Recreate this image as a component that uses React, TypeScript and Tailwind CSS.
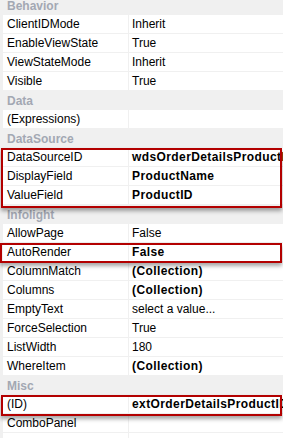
type Row = { name: string; value?: string; bold?: boolean };
type Section = { title: string; rows: Row[] };

const sections: Section[] = [
  {
    title: 'Behavior',
    rows: [
      { name: 'ClientIDMode', value: 'Inherit' },
      { name: 'EnableViewState', value: 'True' },
      { name: 'ViewStateMode', value: 'Inherit' },
      { name: 'Visible', value: 'True' },
    ],
  },
  { title: 'Data', rows: [{ name: '(Expressions)' }] },
  {
    title: 'DataSource',
    rows: [
      { name: 'DataSourceID', value: 'wdsOrderDetailsProductID', bold: true },
      { name: 'DisplayField', value: 'ProductName', bold: true },
      { name: 'ValueField', value: 'ProductID', bold: true },
    ],
  },
  {
    title: 'Infolight',
    rows: [
      { name: 'AllowPage', value: 'False' },
      { name: 'AutoRender', value: 'False', bold: true },
      { name: 'ColumnMatch', value: '(Collection)', bold: true },
      { name: 'Columns', value: '(Collection)', bold: true },
      { name: 'EmptyText', value: 'select a value...' },
      { name: 'ForceSelection', value: 'True' },
      { name: 'ListWidth', value: '180' },
      { name: 'WhereItem', value: '(Collection)', bold: true },
    ],
  },
  {
    title: 'Misc',
    rows: [
      { name: '(ID)', value: 'extOrderDetailsProductID', bold: true },
      { name: 'ComboPanel' },
      { name: '' },
    ],
  },
];

function PropRow({ row }: { row: Row }) {
  return (
    <div className="flex h-[19px] border-b border-[#f0f0f0] pl-[3px]">
      <div className="flex w-[125px] items-center bg-white pl-[4px] text-black">{row.name}</div>
      <div className="w-px bg-[#f0f0f0]" />
      <div
        className={`flex min-w-0 flex-1 items-center overflow-hidden whitespace-nowrap bg-white pl-[3px] text-black ${
          row.bold ? 'font-bold tracking-[0.4px]' : ''
        }`}
      >
        {row.value}
      </div>
    </div>
  );
}

export default function App() {
  return (
    <div
      className="relative h-[438px] w-[283px] overflow-hidden bg-[#f0f0f0] text-[12px] leading-none"
      style={{ fontFamily: '"Liberation Sans", Arial, sans-serif' }}
    >
      <div className="mt-[-4px]">
        {sections.map((s) => (
          <div key={s.title}>
            <div className="flex h-[19px] items-center pl-[7px] font-bold text-[#a3a8b3]">{s.title}</div>
            {s.rows.map((r, i) => (
              <PropRow key={i} row={r} />
            ))}
          </div>
        ))}
      </div>

      {/* highlight boxes drawn over the grid */}
      <div className="absolute left-[1px] top-[148px] h-[60px] w-[281px] border-2 border-[#b30000] shadow-[0_3px_4px_rgba(0,0,0,0.35)]" />
      <div className="absolute left-0 top-[243px] h-[20px] w-[282px] border-2 border-[#b30000] shadow-[0_3px_4px_rgba(0,0,0,0.35)]" />
      <div className="absolute left-[1px] top-[395px] h-[21px] w-[281px] border-2 border-[#b30000] shadow-[0_3px_4px_rgba(0,0,0,0.35)]" />
    </div>
  );
}
